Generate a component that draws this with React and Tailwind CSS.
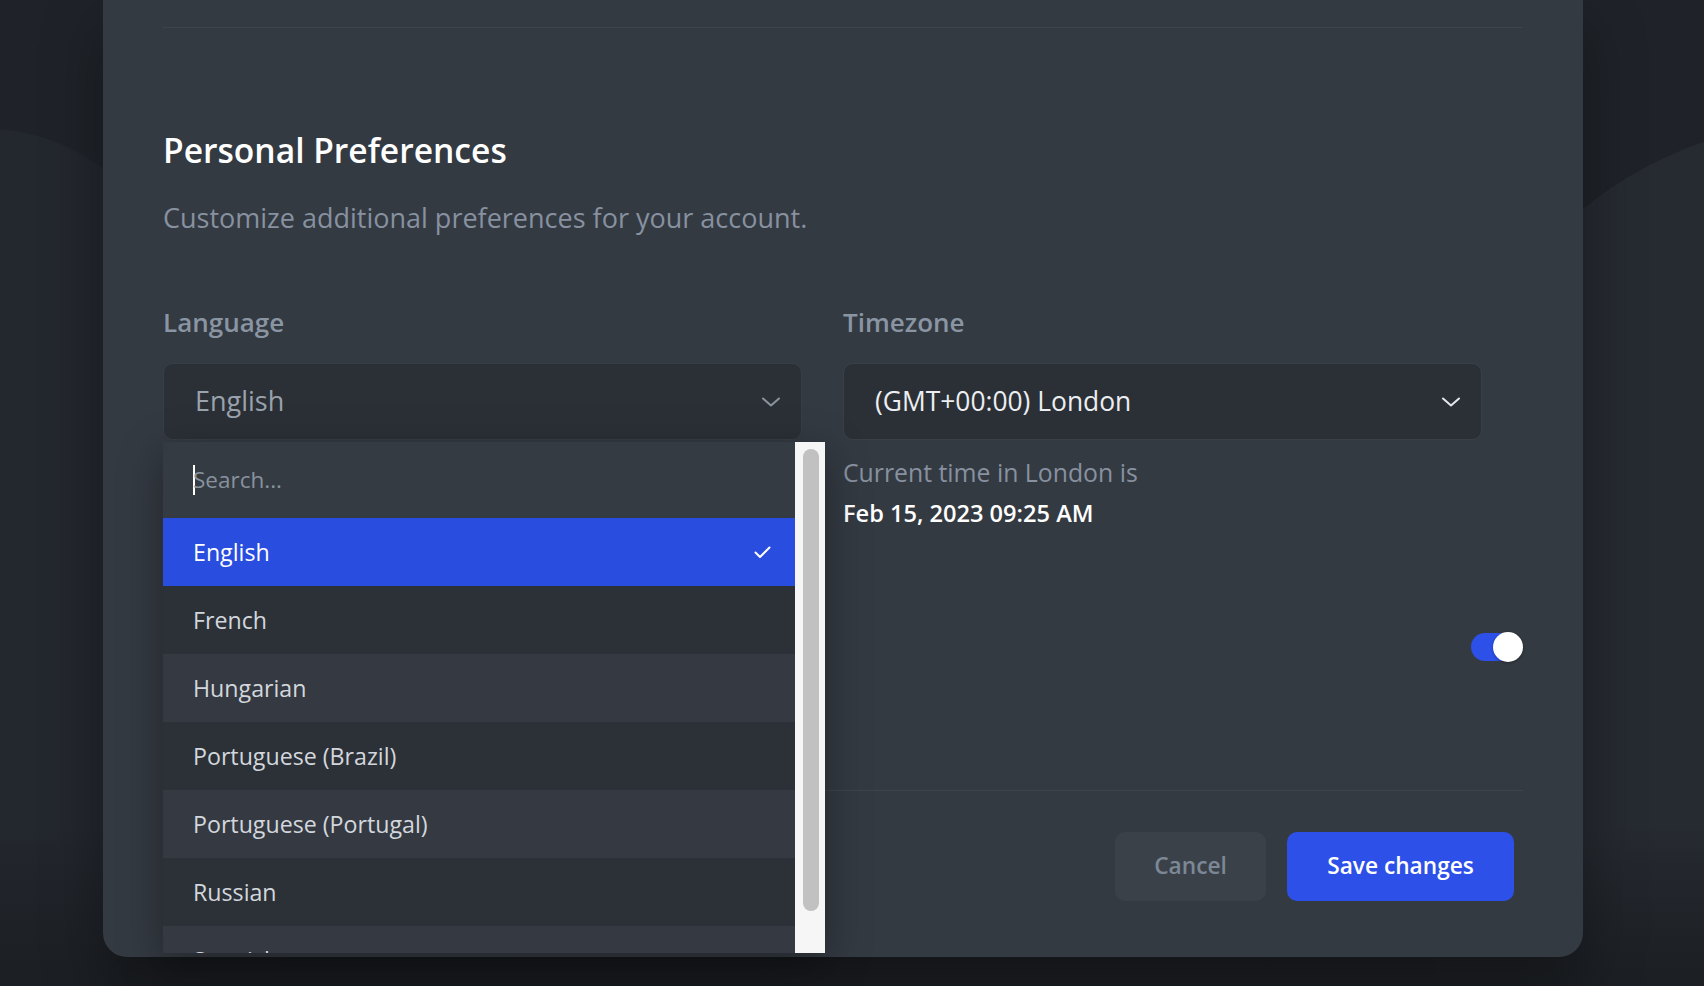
import { useState } from 'react';

const languages = [
  'English',
  'French',
  'Hungarian',
  'Portuguese (Brazil)',
  'Portuguese (Portugal)',
  'Russian',
  'Spanish',
];

function Chevron({ className }) {
  return (
    <svg width="18" height="10" viewBox="0 0 18 10" fill="none" className={className}>
      <path d="M1 1.5 L9 8.5 L17 1.5" stroke="currentColor" strokeWidth="2" strokeLinecap="round" strokeLinejoin="round" />
    </svg>
  );
}

function Check() {
  return (
    <svg width="17" height="13" viewBox="0 0 17 13" fill="none">
      <path d="M1.5 6.5 L6 11 L15.5 1.5" stroke="white" strokeWidth="2" strokeLinecap="round" strokeLinejoin="round" />
    </svg>
  );
}

function LanguageDropdown({ selected }) {
  return (
    <div className="absolute left-0 top-[79px] z-10 flex h-[511px] w-[662px] shadow-[0_12px_40px_rgba(0,0,0,0.35)]">
      <div className="flex-1 overflow-hidden rounded-l-[16px]">
        <div className="flex h-[76px] items-center bg-[#353b43] pl-[30px]">
          <span className="h-[30px] w-[2px] bg-white" />
          <span className="-ml-[2px] text-[22.5px] text-[#88929e]">Search...</span>
        </div>
        {languages.map((lang, i) => {
          const active = lang === selected;
          const bg = active ? 'bg-[#284ddf]' : i % 2 === 1 ? 'bg-[#2c3138]' : 'bg-[#353a42]';
          return (
            <div
              key={lang}
              className={`flex h-[68px] items-center justify-between pl-[30px] pr-[24px] ${bg}`}
            >
              <span className={`text-[23.2px] ${active ? 'text-white' : 'text-[#d3d7dd]'}`}>{lang}</span>
              {active && <Check />}
            </div>
          );
        })}
      </div>
      {/* scrollbar */}
      <div className="relative w-[30px] bg-[#f6f6f6]">
        <div className="absolute left-[8px] top-[7px] h-[462px] w-[16px] rounded-full bg-[#c1c1c1]" />
      </div>
    </div>
  );
}

export default function App() {
  const [notify] = useState(true);

  return (
    <div className="relative h-[986px] w-full overflow-hidden bg-[#1f2329] font-['Open_Sans',sans-serif]">
      {/* background shapes */}
      <div className="absolute inset-0 overflow-hidden">
        <div className="absolute left-[-328px] top-[129px] h-[1200px] w-[636px] rounded-[50%] bg-[#23272e]" />
        <div className="absolute left-[1434px] top-[120px] h-[800px] w-[800px] rounded-full bg-[#262a31]" />
        <div className="absolute left-[1434px] top-[520px] h-[470px] w-[800px] bg-[#262a31]" />
        <div className="absolute bottom-0 left-0 h-[160px] w-full bg-linear-to-b from-transparent to-[#1b1e22]" />
      </div>

      <div className="relative ml-[103px] h-[957px] w-[1480px] rounded-b-[24px] bg-[#343a42] px-[60px] pt-[27px] shadow-[0_24px_60px_rgba(0,0,0,0.35)]">
        <div className="border-t border-[#3e444c]" />

        <h2 className="mt-[100px] text-[33.6px] font-semibold leading-[44px] text-white">Personal Preferences</h2>
        <p className="mt-[28px] text-[27px] leading-[36px] text-[#8791a0]">
          Customize additional preferences for your account.
        </p>

        <div className="mt-[69px] grid w-[1319px] grid-cols-2 gap-x-[41px]">
          <div>
            <label className="block text-[26px] font-semibold leading-[34px] text-[#8a95a3]">Language</label>
            <div className="relative mt-[24px]">
              <div className="flex h-[77px] items-center justify-between rounded-[10px] border border-[#383e46] bg-[#2b3037] pl-[31px] pr-[21px]">
                <span className="text-[27px] text-[#9aa2ac]">English</span>
                <Chevron className="text-[#8a939e]" />
              </div>
              <LanguageDropdown selected="English" />
            </div>
          </div>
          <div>
            <label className="block text-[26px] font-semibold leading-[34px] text-[#8a95a3]">Timezone</label>
            <div className="mt-[24px] flex h-[77px] items-center justify-between rounded-[10px] border border-[#3a4048] bg-[#2b3037] pl-[31px] pr-[21px]">
              <span className="text-[26.4px] text-[#eceef1]">(GMT+00:00) London</span>
              <Chevron className="text-[#e5e7eb]" />
            </div>
            <p className="mt-[12px] text-[24.8px] leading-[41px] text-[#8791a0]">Current time in London is</p>
            <p className="text-[23.6px] font-semibold leading-[41px] text-white">Feb 15, 2023 09:25 AM</p>
          </div>
        </div>

        <div className="mt-[98px] flex h-[30px] justify-end">
          <div className="relative h-[30px] w-[52px]">
            <div className={`absolute left-0 top-[1px] h-[28px] w-[46px] rounded-full ${notify ? 'bg-[#2c50e8]' : 'bg-[#4b525b]'}`} />
            <div className="absolute right-0 top-0 h-[30px] w-[30px] rounded-full bg-white shadow-[0_1px_3px_rgba(0,0,0,0.3)]" />
          </div>
        </div>

        <div className="mt-[128px] border-t border-[#3e444c]" />

        <div className="mt-[41px] flex justify-end gap-[21px] pr-[9px]">
          <button className="h-[69px] w-[151px] rounded-[10px] bg-[#3b4149] text-[22.7px] font-semibold text-[#7c8896]">
            Cancel
          </button>
          <button className="h-[69px] w-[227px] rounded-[10px] bg-[#2c50e8] text-[22.7px] font-semibold text-white">
            Save changes
          </button>
        </div>
      </div>
    </div>
  );
}
